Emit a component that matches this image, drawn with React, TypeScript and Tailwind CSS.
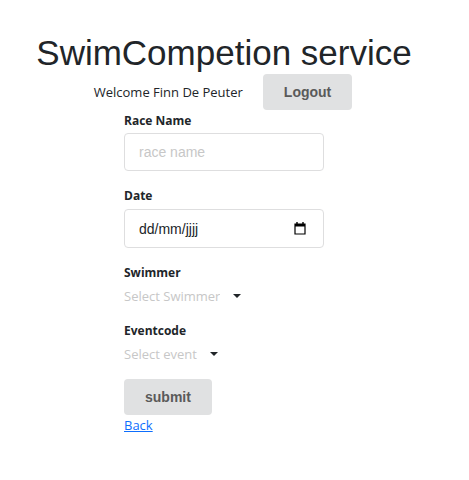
import { useState } from "react";

const buttonClass =
  "h-9 rounded bg-[#e0e1e2] px-[21px] font-['Liberation_Sans',Arial,sans-serif] text-sm font-bold text-[#5a5a5a]";

const inputClass =
  "w-full rounded border border-[#dededf] px-3.5 font-['Liberation_Sans',Arial,sans-serif] text-sm outline-none focus:border-[#85b7d9]";

const labelClass = "block text-xs leading-[22px] font-bold";

function CalendarIcon() {
  return (
    <svg viewBox="0 0 12 13" className="h-[13px] w-3" fill="none" aria-hidden="true">
      <path d="M1 2h10v10H1z" stroke="#000" strokeWidth="1.2" />
      <path d="M1 2h10v2.5H1z" fill="#000" />
      <path d="M3 0v2M9 0v2" stroke="#000" strokeWidth="1.4" />
    </svg>
  );
}

function Dropdown({ id, label, placeholder }: { id: string; label: string; placeholder: string }) {
  return (
    <div>
      <label htmlFor={id} className={labelClass}>
        {label}
      </label>
      <div className="mt-0.5 flex h-5 items-center">
        <select
          id={id}
          defaultValue=""
          className="field-sizing-content cursor-pointer appearance-none bg-transparent text-[13px] leading-5 text-[#c7c7c7] outline-none"
        >
          <option value="">{placeholder}</option>
        </select>
        <svg viewBox="0 0 8 4" className="ml-[13px] h-1 w-2" aria-hidden="true">
          <path d="M0 0h8L4 4z" fill="#212529" />
        </svg>
      </div>
    </div>
  );
}

export default function App() {
  const [name, setName] = useState("");
  const [date, setDate] = useState("");

  return (
    <main className="flex flex-col items-center bg-white pt-8 pr-[21px] pb-11 font-['Open_Sans','Noto_Sans',sans-serif] text-[13px] leading-5 text-[#212529]">
      <h1 className="font-['Liberation_Sans',Arial,sans-serif] text-[35px] leading-[42px] whitespace-nowrap">
        SwimCompetion service
      </h1>
      <div className="flex items-center gap-5 pr-0.5">
        <span>Welcome Finn De Peuter</span>
        <button type="button" className={buttonClass}>
          Logout
        </button>
      </div>
      <form className="w-[200px]" onSubmit={(e) => e.preventDefault()}>
        <label htmlFor="race" className={labelClass}>
          Race Name
        </label>
        <input
          id="race"
          type="text"
          placeholder="race name"
          value={name}
          onChange={(e) => setName(e.target.value)}
          className={`${inputClass} mt-px block h-[38px] placeholder:text-[#c7c7c7]`}
        />
        <label htmlFor="date" className={`${labelClass} mt-3.5`}>
          Date
        </label>
        <div className={`${inputClass} mt-0.5 flex h-[39px] items-center`}>
          <input
            id="date"
            type="text"
            placeholder="dd/mm/jjjj"
            value={date}
            onChange={(e) => setDate(e.target.value)}
            className="min-w-0 flex-1 outline-none placeholder:text-[#212529]"
          />
          <button type="button" aria-label="Open calendar" className="mr-[3px]">
            <CalendarIcon />
          </button>
        </div>
        <div className="mt-3.5 flex flex-col gap-3.5">
          <Dropdown id="swimmer" label="Swimmer" placeholder="Select Swimmer" />
          <Dropdown id="event" label="Eventcode" placeholder="Select event" />
        </div>
        <button type="submit" className={`${buttonClass} mt-[15px] block`}>
          submit
        </button>
        <a href="#back" className="text-[#0d6efd] underline">
          Back
        </a>
      </form>
    </main>
  );
}
